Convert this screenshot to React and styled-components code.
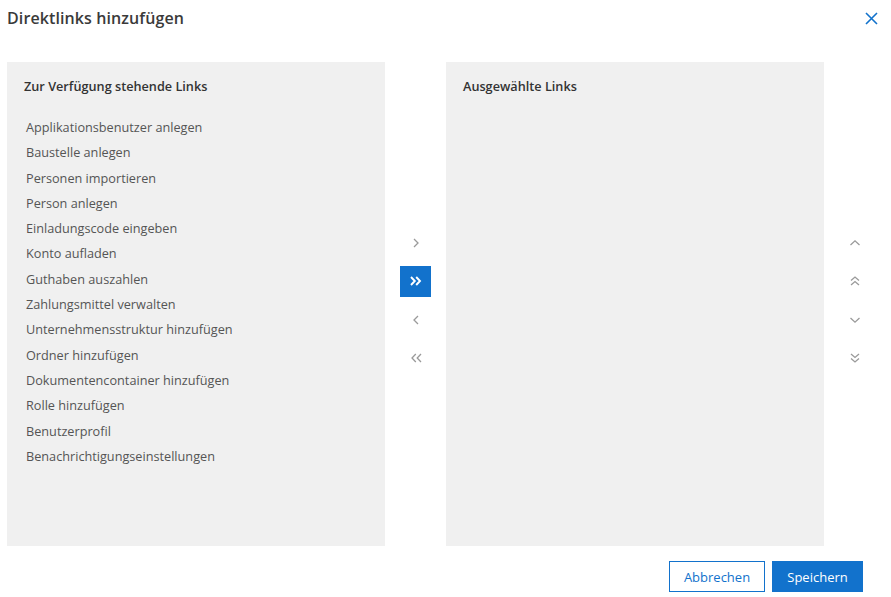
import React from "react";
import styled, { createGlobalStyle } from "styled-components";

const Global = createGlobalStyle`
  html, body { margin: 0; padding: 0; background: #fff; }
  body { font-family: "Open Sans", "Noto Sans", sans-serif; color: #333; }
  * { box-sizing: border-box; }
`;

const Dialog = styled.div`
  width: 891px;
  height: 597px;
  display: flex;
  flex-direction: column;
`;

const Header = styled.div`
  display: flex;
  align-items: center;
  justify-content: space-between;
  height: 36px;
  padding: 0 12px 0 7px;
`;

const Title = styled.h1`
  margin: 0;
  font-size: 16px;
  font-weight: 600;
  color: #3a3a3a;
  letter-spacing: 0.1px;
`;

const CloseButton = styled.button`
  border: 0;
  background: none;
  padding: 0;
  width: 16px;
  height: 16px;
  display: flex;
  align-items: center;
  justify-content: center;
  cursor: pointer;
`;

const Body = styled.div`
  display: flex;
  margin-top: 26px;
  padding-left: 7px;
  height: 484px;
`;

const Panel = styled.div`
  width: 378px;
  background: #f0f0f0;
  padding: 15px 17px;
`;

const PanelTitle = styled.div`
  font-size: 12.7px;
  font-weight: 600;
  color: #333;
  line-height: 18px;
  margin-bottom: 20px;
`;

const List = styled.ul`
  list-style: none;
  margin: 0;
  padding: 0 0 0 2px;
`;

const Item = styled.li`
  font-size: 12.7px;
  color: #555;
  height: 25.3px;
  line-height: 25.3px;
  white-space: nowrap;
`;

const Controls = styled.div`
  display: flex;
  flex-direction: column;
  align-items: ${(p) => (p.$align === "start" ? "flex-start" : "center")};
  gap: 7.5px;
  padding-top: 165px;
  width: ${(p) => p.$width}px;
  padding-left: ${(p) => p.$padLeft || 0}px;
`;

const IconButton = styled.button`
  width: 31px;
  height: 31px;
  border: 0;
  padding: 0;
  display: flex;
  align-items: center;
  justify-content: center;
  background: ${(p) => (p.$active ? "#1272cc" : "transparent")};
  cursor: pointer;
`;

const Footer = styled.div`
  display: flex;
  justify-content: flex-end;
  gap: 7px;
  padding: 15px 28px 0 0;
`;

const Button = styled.button`
  height: 31px;
  padding: 0;
  width: ${(p) => p.$w}px;
  font-family: "Open Sans", "Noto Sans", sans-serif;
  font-size: 13px;
  border: 1px solid #1272cc;
  background: ${(p) => (p.$primary ? "#1272cc" : "#fff")};
  color: ${(p) => (p.$primary ? "#fff" : "#1272cc")};
  cursor: pointer;
`;

const Chevron = ({ dir = "right", double = false, color = "#9a9a9a", sw = 1.3 }) => {
  const rot = dir === "left" ? 180 : 0;
  return (
    <svg width="14" height="14" viewBox="0 0 14 14" style={{ transform: `rotate(${rot}deg)` }}>
      {double ? (
        <>
          <path d="M2 3 L5.8 7 L2 11" fill="none" stroke={color} strokeWidth={sw} />
          <path d="M7.2 3 L11 7 L7.2 11" fill="none" stroke={color} strokeWidth={sw} />
        </>
      ) : (
        <path d="M5 3 L9 7 L5 11" fill="none" stroke={color} strokeWidth={sw} />
      )}
    </svg>
  );
};

const VChevron = ({ dir = "up", double = false, color = "#9a9a9a" }) => {
  const rot = dir === "up" ? 0 : 180;
  return (
    <svg width="12" height="12" viewBox="0 0 12 12" style={{ transform: `rotate(${rot}deg)` }}>
      {double ? (
        <>
          <path d="M2 5.5 L6 2 L10 5.5" fill="none" stroke={color} strokeWidth="1.3" />
          <path d="M2 10 L6 6.5 L10 10" fill="none" stroke={color} strokeWidth="1.3" />
        </>
      ) : (
        <path d="M1.5 8 L6 3.8 L10.5 8" fill="none" stroke={color} strokeWidth="1.3" />
      )}
    </svg>
  );
};

const links = [
  "Applikationsbenutzer anlegen",
  "Baustelle anlegen",
  "Personen importieren",
  "Person anlegen",
  "Einladungscode eingeben",
  "Konto aufladen",
  "Guthaben auszahlen",
  "Zahlungsmittel verwalten",
  "Unternehmensstruktur hinzufügen",
  "Ordner hinzufügen",
  "Dokumentencontainer hinzufügen",
  "Rolle hinzufügen",
  "Benutzerprofil",
  "Benachrichtigungseinstellungen",
];

export default function App() {
  return (
    <>
      <Global />
      <Dialog>
        <Header>
          <Title>Direktlinks hinzufügen</Title>
          <CloseButton aria-label="Schließen">
            <svg width="13" height="13" viewBox="0 0 13 13">
              <path d="M1 1 L12 12 M12 1 L1 12" stroke="#1272cc" strokeWidth="1.6" fill="none" />
            </svg>
          </CloseButton>
        </Header>
        <Body>
          <Panel>
            <PanelTitle>Zur Verfügung stehende Links</PanelTitle>
            <List>
              {links.map((l) => (
                <Item key={l}>{l}</Item>
              ))}
            </List>
          </Panel>
          <Controls $width={61}>
            <IconButton><Chevron dir="right" /></IconButton>
            <IconButton $active><Chevron dir="right" double color="#fff" sw={1.9} /></IconButton>
            <IconButton><Chevron dir="left" /></IconButton>
            <IconButton><Chevron dir="left" double /></IconButton>
          </Controls>
          <Panel>
            <PanelTitle>Ausgewählte Links</PanelTitle>
          </Panel>
          <Controls $width={67} $padLeft={15} $align="start">
            <IconButton><VChevron dir="up" /></IconButton>
            <IconButton><VChevron dir="up" double /></IconButton>
            <IconButton><VChevron dir="down" /></IconButton>
            <IconButton><VChevron dir="down" double /></IconButton>
          </Controls>
        </Body>
        <Footer>
          <Button $w={96}>Abbrechen</Button>
          <Button $w={91} $primary>Speichern</Button>
        </Footer>
      </Dialog>
    </>
  );
}
